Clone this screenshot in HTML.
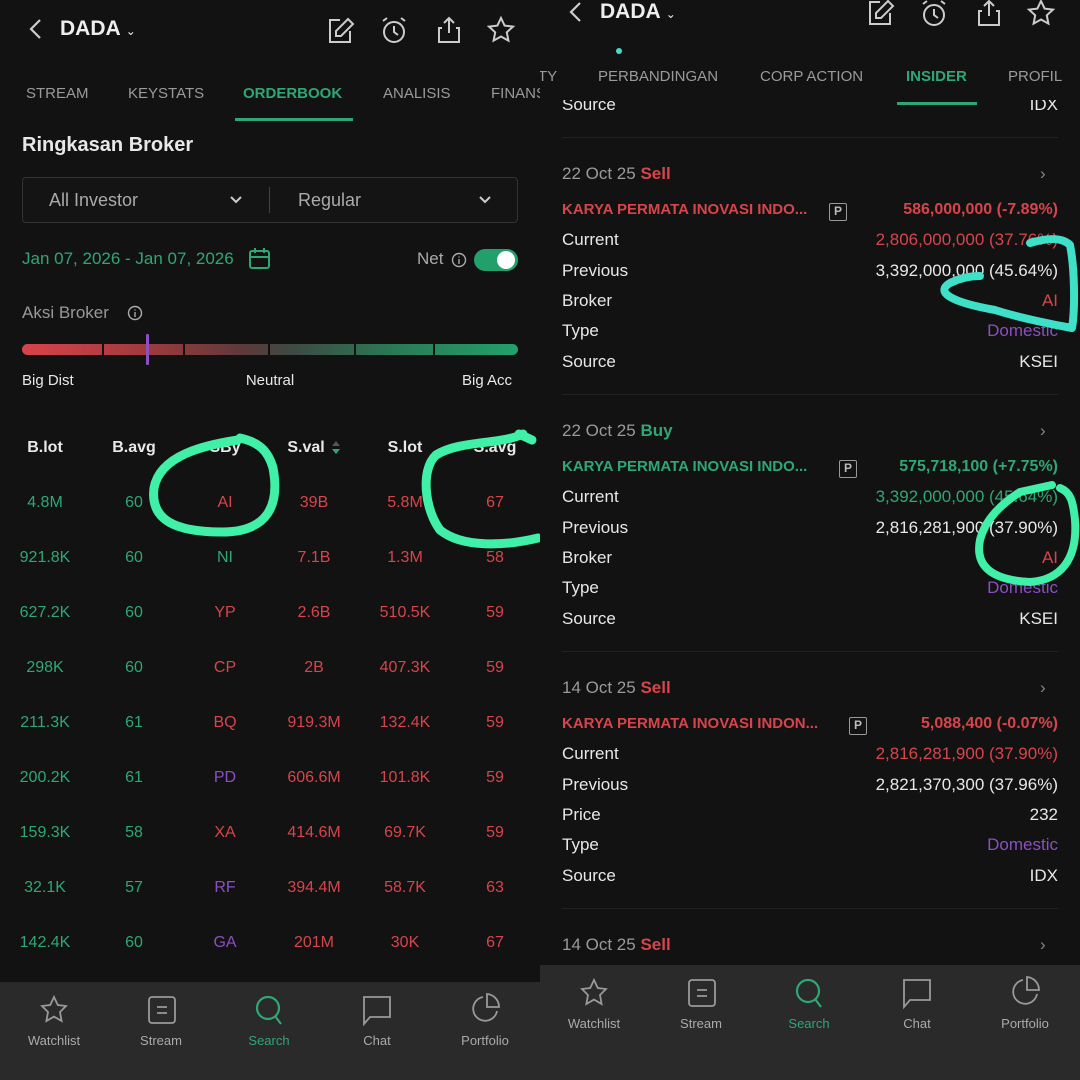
<!DOCTYPE html>
<html><head><meta charset="utf-8"><style>
*{margin:0;padding:0;box-sizing:border-box}
body{width:1080px;height:1080px;background:#111;overflow:hidden;position:relative;font-family:"Liberation Sans",sans-serif;color:#e6e6e6}
.p{position:absolute;top:0;width:540px;height:1080px;overflow:hidden;background:#121212}
.a{position:absolute;height:24px;line-height:24px;white-space:nowrap}
.c{transform:translateX(-50%)}
.r{text-align:right}
.g{color:#2fa775}.rd{color:#d6454b}.pu{color:#8b4fc2}.gr{color:#9a9a9a}.w{color:#e8e8e8}
.b{font-weight:bold}
.nav{position:absolute;left:0;width:540px;background:#2a2a2a}
.nl{position:absolute;font-size:13px;color:#aaa;transform:translateX(-50%)}
svg.i{position:absolute}
.sep{position:absolute;left:22px;width:496px;height:1px;background:#222}
.pb{display:inline-block;width:18px;height:18px;border:1.5px solid #999;border-radius:2px;font-size:12px;line-height:15px;text-align:center;color:#bbb;font-weight:bold}
</style></head><body>

<!-- LEFT -->
<div class="p" style="left:0">
<svg class="i" style="left:26px;top:17px" width="20" height="24" viewBox="0 0 20 24"><path d="M14 3 L5 12 L14 21" fill="none" stroke="#ccc" stroke-width="2.2"/></svg>
<div class="a b" style="left:60px;top:17px;font-size:21px;color:#eee">DADA <span style="font-size:12px;font-weight:normal">&#8964;</span></div>
<svg class="i" style="left:326px;top:16px" width="30" height="30" viewBox="0 0 30 30" fill="none" stroke="#ccc" stroke-width="2"><path d="M14 4H4V26H24V15"/><path d="M22 3L27 8L15 20H10V15Z"/></svg>
<svg class="i" style="left:379px;top:15px" width="30" height="30" viewBox="0 0 30 30" fill="none" stroke="#ccc" stroke-width="2"><circle cx="15" cy="17" r="10"/><path d="M15 11V17L19 20M4 6L8 3M26 6L22 3"/></svg>
<svg class="i" style="left:434px;top:15px" width="30" height="30" viewBox="0 0 30 30" fill="none" stroke="#ccc" stroke-width="2"><path d="M15 3V18M10 8L15 3L20 8M8 13H5V27H25V13H22"/></svg>
<svg class="i" style="left:486px;top:15px" width="30" height="30" viewBox="0 0 30 30" fill="none" stroke="#ccc" stroke-width="2"><path d="M15 3L18.6 10.6L27 11.6L20.8 17.3L22.4 25.6L15 21.5L7.6 25.6L9.2 17.3L3 11.6L11.4 10.6Z"/></svg>

<div class="a gr" style="left:26px;top:82px;font-size:15px">STREAM</div>
<div class="a gr" style="left:128px;top:82px;font-size:15px">KEYSTATS</div>
<div class="a g b" style="left:243px;top:82px;font-size:15px">ORDERBOOK</div>
<div class="a gr" style="left:383px;top:82px;font-size:15px">ANALISIS</div>
<div class="a gr" style="left:491px;top:82px;font-size:15px">FINANS</div>
<div style="position:absolute;left:235px;top:118px;width:118px;height:3px;background:#2fa775"></div>

<div class="a b w" style="left:22px;top:133px;font-size:20px">Ringkasan Broker</div>
<div style="position:absolute;left:22px;top:177px;width:496px;height:46px;border:1px solid #333;border-radius:4px;background:#141414"></div>
<div style="position:absolute;left:269px;top:187px;width:1px;height:26px;background:#444"></div>
<div class="a" style="left:49px;top:188px;font-size:18px;color:#aaa">All Investor</div>
<div class="a" style="left:298px;top:188px;font-size:18px;color:#aaa">Regular</div>
<svg class="i" style="left:228px;top:193px" width="16" height="14"><path d="M3 4L8 9L13 4" fill="none" stroke="#ccc" stroke-width="2"/></svg>
<svg class="i" style="left:477px;top:193px" width="16" height="14"><path d="M3 4L8 9L13 4" fill="none" stroke="#ccc" stroke-width="2"/></svg>

<div class="a g" style="left:22px;top:247px;font-size:17px">Jan 07, 2026 - Jan 07, 2026</div>
<svg class="i" style="left:248px;top:247px" width="24" height="24" fill="none" stroke="#2fa775" stroke-width="2"><rect x="2" y="4" width="19" height="17" rx="2"/><path d="M2 10H21M7 1V6M16 1V6"/></svg>
<div class="a" style="left:417px;top:247px;font-size:17px;color:#aaa">Net</div>
<svg class="i" style="left:451px;top:252px" width="16" height="16" fill="none" stroke="#aaa" stroke-width="1.4"><circle cx="8" cy="8" r="6.5"/><path d="M8 7V12M8 4.5V5.5"/></svg>
<div style="position:absolute;left:474px;top:249px;width:44px;height:22px;border-radius:11px;background:#22a06b"></div>
<div style="position:absolute;left:497px;top:251px;width:18px;height:18px;border-radius:9px;background:#fff"></div>

<div class="a" style="left:22px;top:301px;font-size:17px;color:#999">Aksi Broker</div>
<svg class="i" style="left:127px;top:305px" width="16" height="16" fill="none" stroke="#aaa" stroke-width="1.4"><circle cx="8" cy="8" r="6.5"/><path d="M8 7V12M8 4.5V5.5"/></svg>
<div style="position:absolute;left:22px;top:344px;width:496px;height:11px;border-radius:6px;background:linear-gradient(90deg,#d9434a 0%,#a03a3e 25%,#5a3a3a 45%,#3d4a44 55%,#2a7a56 75%,#22a06b 100%)"></div>
<div style="position:absolute;left:102px;top:344px;width:2px;height:11px;background:#111"></div>
<div style="position:absolute;left:183px;top:344px;width:2px;height:11px;background:#111"></div>
<div style="position:absolute;left:268px;top:344px;width:2px;height:11px;background:#111"></div>
<div style="position:absolute;left:354px;top:344px;width:2px;height:11px;background:#111"></div>
<div style="position:absolute;left:433px;top:344px;width:2px;height:11px;background:#111"></div>
<div style="position:absolute;left:146px;top:334px;width:3px;height:31px;background:#8b4fc2;border-radius:1px"></div>
<div class="a w" style="left:22px;top:369px;font-size:15px">Big Dist</div>
<div class="a w c" style="left:270px;top:369px;font-size:15px">Neutral</div>
<div class="a w" style="left:462px;top:369px;font-size:15px">Big Acc</div>

<div class="a b w c" style="left:45px;top:436px;font-size:16px">B.lot</div>
<div class="a b w c" style="left:134px;top:436px;font-size:16px">B.avg</div>
<div class="a b w c" style="left:225px;top:436px;font-size:16px">SBy</div>
<div class="a b w c" style="left:306px;top:436px;font-size:16px">S.val</div>
<svg class="i" style="left:330px;top:438px" width="12" height="20"><path d="M2 8L6 3L10 8Z" fill="#555"/><path d="M2 11L6 16L10 11Z" fill="#2fa775"/></svg>
<div class="a b w c" style="left:405px;top:436px;font-size:16px">S.lot</div>
<div class="a b w c" style="left:495px;top:436px;font-size:16px">S.avg</div>

<div style="position:absolute;left:0;top:491px;width:540px;font-size:16px">
<div class="a g c" style="left:45px;top:0">4.8M</div><div class="a g c" style="left:134px;top:0">60</div><div class="a rd c" style="left:225px;top:0">AI</div><div class="a rd c" style="left:314px;top:0">39B</div><div class="a rd c" style="left:405px;top:0">5.8M</div><div class="a rd c" style="left:495px;top:0">67</div>
<div class="a g c" style="left:45px;top:55px">921.8K</div><div class="a g c" style="left:134px;top:55px">60</div><div class="a g c" style="left:225px;top:55px">NI</div><div class="a rd c" style="left:314px;top:55px">7.1B</div><div class="a rd c" style="left:405px;top:55px">1.3M</div><div class="a rd c" style="left:495px;top:55px">58</div>
<div class="a g c" style="left:45px;top:110px">627.2K</div><div class="a g c" style="left:134px;top:110px">60</div><div class="a rd c" style="left:225px;top:110px">YP</div><div class="a rd c" style="left:314px;top:110px">2.6B</div><div class="a rd c" style="left:405px;top:110px">510.5K</div><div class="a rd c" style="left:495px;top:110px">59</div>
<div class="a g c" style="left:45px;top:165px">298K</div><div class="a g c" style="left:134px;top:165px">60</div><div class="a rd c" style="left:225px;top:165px">CP</div><div class="a rd c" style="left:314px;top:165px">2B</div><div class="a rd c" style="left:405px;top:165px">407.3K</div><div class="a rd c" style="left:495px;top:165px">59</div>
<div class="a g c" style="left:45px;top:220px">211.3K</div><div class="a g c" style="left:134px;top:220px">61</div><div class="a rd c" style="left:225px;top:220px">BQ</div><div class="a rd c" style="left:314px;top:220px">919.3M</div><div class="a rd c" style="left:405px;top:220px">132.4K</div><div class="a rd c" style="left:495px;top:220px">59</div>
<div class="a g c" style="left:45px;top:275px">200.2K</div><div class="a g c" style="left:134px;top:275px">61</div><div class="a pu c" style="left:225px;top:275px">PD</div><div class="a rd c" style="left:314px;top:275px">606.6M</div><div class="a rd c" style="left:405px;top:275px">101.8K</div><div class="a rd c" style="left:495px;top:275px">59</div>
<div class="a g c" style="left:45px;top:330px">159.3K</div><div class="a g c" style="left:134px;top:330px">58</div><div class="a rd c" style="left:225px;top:330px">XA</div><div class="a rd c" style="left:314px;top:330px">414.6M</div><div class="a rd c" style="left:405px;top:330px">69.7K</div><div class="a rd c" style="left:495px;top:330px">59</div>
<div class="a g c" style="left:45px;top:385px">32.1K</div><div class="a g c" style="left:134px;top:385px">57</div><div class="a pu c" style="left:225px;top:385px">RF</div><div class="a rd c" style="left:314px;top:385px">394.4M</div><div class="a rd c" style="left:405px;top:385px">58.7K</div><div class="a rd c" style="left:495px;top:385px">63</div>
<div class="a g c" style="left:45px;top:440px">142.4K</div><div class="a g c" style="left:134px;top:440px">60</div><div class="a pu c" style="left:225px;top:440px">GA</div><div class="a rd c" style="left:314px;top:440px">201M</div><div class="a rd c" style="left:405px;top:440px">30K</div><div class="a rd c" style="left:495px;top:440px">67</div>
</div>

<div class="nav" style="top:982px;height:98px">
<svg class="i" style="left:38px;top:12px" width="32" height="32" fill="none" stroke="#999" stroke-width="1.8"><path d="M16 3L19.8 11L28 12L22 18L23.6 27L16 22.6L8.4 27L10 18L4 12L12.2 11Z"/></svg>
<svg class="i" style="left:146px;top:12px" width="32" height="32" fill="none" stroke="#999" stroke-width="1.8"><rect x="3" y="3" width="26" height="26" rx="3"/><path d="M11 13H21M11 19H21"/></svg>
<svg class="i" style="left:253px;top:12px" width="32" height="34" fill="none" stroke="#2fa775" stroke-width="2.2"><circle cx="15" cy="14" r="11"/><path d="M22 22L28 30"/></svg>
<svg class="i" style="left:361px;top:12px" width="32" height="34" fill="none" stroke="#999" stroke-width="1.8"><path d="M3 3H29V23H9L3 30Z"/></svg>
<svg class="i" style="left:469px;top:10px" width="32" height="34" fill="none" stroke="#999" stroke-width="1.8"><path d="M14 5A12 12 0 1 0 28 19"/><path d="M18 2V15H30A13 13 0 0 0 18 2Z"/></svg>
<div class="nl" style="left:54px;top:51px">Watchlist</div>
<div class="nl" style="left:161px;top:51px">Stream</div>
<div class="nl" style="left:269px;top:51px;color:#2fa775">Search</div>
<div class="nl" style="left:377px;top:51px">Chat</div>
<div class="nl" style="left:485px;top:51px">Portfolio</div>
</div>

<svg style="position:absolute;left:0;top:0" width="540" height="1080" fill="none" stroke="#3ff0a6" stroke-width="9" stroke-linecap="round">
<path d="M238 440C205 445 160 455 154 488C150 520 175 532 222 532C268 532 280 505 273 468C268 450 258 442 240 438"/>
<path d="M523 434C500 445 460 440 436 455C420 470 425 510 440 530C462 548 505 546 538 538"/>
<path d="M519 434L532 440"/>
</svg>
</div>

<!-- RIGHT -->
<div class="p" style="left:540px">
<svg class="i" style="left:26px;top:0px" width="20" height="24" viewBox="0 0 20 24"><path d="M14 3 L5 12 L14 21" fill="none" stroke="#ccc" stroke-width="2.2"/></svg>
<div class="a b" style="left:60px;top:0px;font-size:21px;color:#eee">DADA <span style="font-size:12px;font-weight:normal">&#8964;</span></div>
<svg class="i" style="left:326px;top:0px" width="30" height="28" viewBox="0 2 30 28" fill="none" stroke="#ccc" stroke-width="2"><path d="M14 4H4V26H24V15"/><path d="M22 3L27 8L15 20H10V15Z"/></svg>
<svg class="i" style="left:379px;top:0px" width="30" height="28" viewBox="0 2 30 28" fill="none" stroke="#ccc" stroke-width="2"><circle cx="15" cy="17" r="10"/><path d="M15 11V17L19 20M4 6L8 3M26 6L22 3"/></svg>
<svg class="i" style="left:434px;top:0px" width="30" height="28" viewBox="0 2 30 28" fill="none" stroke="#ccc" stroke-width="2"><path d="M15 3V18M10 8L15 3L20 8M8 13H5V27H25V13H22"/></svg>
<svg class="i" style="left:486px;top:0px" width="30" height="28" viewBox="0 2 30 28" fill="none" stroke="#ccc" stroke-width="2"><path d="M15 3L18.6 10.6L27 11.6L20.8 17.3L22.4 25.6L15 21.5L7.6 25.6L9.2 17.3L3 11.6L11.4 10.6Z"/></svg>
<div style="position:absolute;left:76px;top:48px;width:6px;height:6px;border-radius:3px;background:#3ee0c8"></div>
<div class="a gr" style="left:-2px;top:65px;font-size:15px">TY</div>
<div class="a gr" style="left:58px;top:65px;font-size:15px">PERBANDINGAN</div>
<div class="a gr" style="left:220px;top:65px;font-size:15px">CORP ACTION</div>
<div class="a g b" style="left:366px;top:65px;font-size:15px">INSIDER</div>
<div class="a gr" style="left:468px;top:65px;font-size:15px">PROFIL</div>
<div style="position:absolute;left:357px;top:102px;width:80px;height:3px;background:#2fa775"></div>
<div style="position:absolute;left:0;top:100px;width:540px;height:14px;overflow:hidden;font-size:17px">
<div class="a w" style="left:22px;top:-7px">Source</div>
<div class="a w r" style="right:22px;top:-7px">IDX</div>
</div>

<div class="sep" style="top:137px"></div>
<div class="sep" style="top:394px"></div>
<div class="sep" style="top:651px"></div>
<div class="sep" style="top:908px"></div>

<div style="position:absolute;left:0;top:0;width:540px;font-size:17px">
<div class="a gr" style="left:22px;top:162px">22 Oct 25 <b class="rd">Sell</b></div>
<div class="a" style="left:500px;top:162px;color:#888">&#x203A;</div>
<div class="a b rd" style="left:22px;top:198px;font-size:15px">KARYA PERMATA INOVASI INDO...</div>
<div class="a" style="left:289px;top:198px"><span class="pb">P</span></div>
<div class="a b rd r" style="right:22px;top:198px;font-size:16px">586,000,000 (-7.89%)</div>
<div class="a w" style="left:22px;top:228px">Current</div><div class="a rd r" style="right:22px;top:228px">2,806,000,000 (37.76%)</div>
<div class="a w" style="left:22px;top:259px">Previous</div><div class="a w r" style="right:22px;top:259px">3,392,000,000 (45.64%)</div>
<div class="a w" style="left:22px;top:289px">Broker</div><div class="a rd r" style="right:22px;top:289px">AI</div>
<div class="a w" style="left:22px;top:319px">Type</div><div class="a pu r" style="right:22px;top:319px">Domestic</div>
<div class="a w" style="left:22px;top:350px">Source</div><div class="a w r" style="right:22px;top:350px">KSEI</div>
<div class="a gr" style="left:22px;top:419px">22 Oct 25 <b class="g">Buy</b></div>
<div class="a" style="left:500px;top:419px;color:#888">&#x203A;</div>
<div class="a b g" style="left:22px;top:455px;font-size:15px">KARYA PERMATA INOVASI INDO...</div>
<div class="a" style="left:299px;top:455px"><span class="pb">P</span></div>
<div class="a b g r" style="right:22px;top:455px;font-size:16px">575,718,100 (+7.75%)</div>
<div class="a w" style="left:22px;top:485px">Current</div><div class="a g r" style="right:22px;top:485px">3,392,000,000 (45.64%)</div>
<div class="a w" style="left:22px;top:516px">Previous</div><div class="a w r" style="right:22px;top:516px">2,816,281,900 (37.90%)</div>
<div class="a w" style="left:22px;top:546px">Broker</div><div class="a rd r" style="right:22px;top:546px">AI</div>
<div class="a w" style="left:22px;top:576px">Type</div><div class="a pu r" style="right:22px;top:576px">Domestic</div>
<div class="a w" style="left:22px;top:607px">Source</div><div class="a w r" style="right:22px;top:607px">KSEI</div>
<div class="a gr" style="left:22px;top:676px">14 Oct 25 <b class="rd">Sell</b></div>
<div class="a" style="left:500px;top:676px;color:#888">&#x203A;</div>
<div class="a b rd" style="left:22px;top:712px;font-size:15px">KARYA PERMATA INOVASI INDON...</div>
<div class="a" style="left:309px;top:712px"><span class="pb">P</span></div>
<div class="a b rd r" style="right:22px;top:712px;font-size:16px">5,088,400 (-0.07%)</div>
<div class="a w" style="left:22px;top:742px">Current</div><div class="a rd r" style="right:22px;top:742px">2,816,281,900 (37.90%)</div>
<div class="a w" style="left:22px;top:773px">Previous</div><div class="a w r" style="right:22px;top:773px">2,821,370,300 (37.96%)</div>
<div class="a w" style="left:22px;top:803px">Price</div><div class="a w r" style="right:22px;top:803px">232</div>
<div class="a w" style="left:22px;top:833px">Type</div><div class="a pu r" style="right:22px;top:833px">Domestic</div>
<div class="a w" style="left:22px;top:864px">Source</div><div class="a w r" style="right:22px;top:864px">IDX</div>
<div class="a gr" style="left:22px;top:933px">14 Oct 25 <b class="rd">Sell</b></div>
<div class="a" style="left:500px;top:933px;color:#888">&#x203A;</div>
</div>

<div class="nav" style="top:965px;height:115px">
<svg class="i" style="left:38px;top:12px" width="32" height="32" fill="none" stroke="#999" stroke-width="1.8"><path d="M16 3L19.8 11L28 12L22 18L23.6 27L16 22.6L8.4 27L10 18L4 12L12.2 11Z"/></svg>
<svg class="i" style="left:146px;top:12px" width="32" height="32" fill="none" stroke="#999" stroke-width="1.8"><rect x="3" y="3" width="26" height="26" rx="3"/><path d="M11 13H21M11 19H21"/></svg>
<svg class="i" style="left:253px;top:12px" width="32" height="34" fill="none" stroke="#2fa775" stroke-width="2.2"><circle cx="15" cy="14" r="11"/><path d="M22 22L28 30"/></svg>
<svg class="i" style="left:361px;top:12px" width="32" height="34" fill="none" stroke="#999" stroke-width="1.8"><path d="M3 3H29V23H9L3 30Z"/></svg>
<svg class="i" style="left:469px;top:10px" width="32" height="34" fill="none" stroke="#999" stroke-width="1.8"><path d="M14 5A12 12 0 1 0 28 19"/><path d="M18 2V15H30A13 13 0 0 0 18 2Z"/></svg>
<div class="nl" style="left:54px;top:51px">Watchlist</div>
<div class="nl" style="left:161px;top:51px">Stream</div>
<div class="nl" style="left:269px;top:51px;color:#2fa775">Search</div>
<div class="nl" style="left:377px;top:51px">Chat</div>
<div class="nl" style="left:485px;top:51px">Portfolio</div>
</div>

<svg style="position:absolute;left:0;top:0" width="540" height="1080" fill="none" stroke-width="8" stroke-linecap="round" stroke-linejoin="round">
<path d="M490 243C500 240 520 235 530 245C535 270 535 310 532 328C515 325 480 318 455 310C410 302 395 292 410 283C420 278 430 276 440 276" stroke="#3ee0c8"/>
<path d="M520 488C530 492 533 500 535 520C538 560 520 580 490 582C450 580 435 565 440 540C445 520 460 505 480 492L512 485" stroke="#40f0a8"/>
</svg>
</div>
</body></html>
